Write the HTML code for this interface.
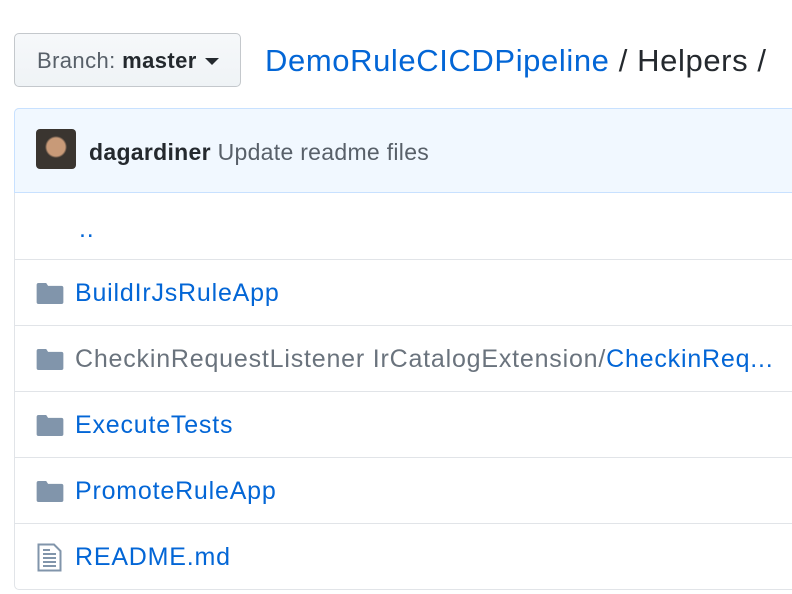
<!DOCTYPE html>
<html><head><style>
body{margin:0;width:792px;height:594px;overflow:hidden;background:#fff;font-family:"Liberation Sans",sans-serif;position:relative}
.btn{position:absolute;left:14px;top:33px;width:225px;height:52px;border:1px solid #c4c8cc;border-radius:5px;background:linear-gradient(#f6f8fa,#eff3f6);font-size:22px;letter-spacing:0.4px;color:#586069;line-height:54px;box-sizing:content-box}
.btn span{position:absolute;left:22px}
.btn b{color:#24292e;font-weight:600}
.caret{position:absolute;left:190px;top:24px;border-left:7px solid transparent;border-right:7px solid transparent;border-top:7px solid #24292e}
.title{position:absolute;left:265px;top:43px;font-size:31px;letter-spacing:0.6px;color:#24292e;white-space:nowrap}
.title a{color:#0366d6}
.box{position:absolute;left:14px;top:108px;width:800px;height:480px;border:1px solid #e1e4e8;border-radius:5px}
.head{position:absolute;left:0;top:0;right:0;height:83px;background:#f1f8ff;border:1px solid #c8e1ff;margin:-1px;border-radius:5px 5px 0 0}
.av{position:absolute;left:21px;top:20px;width:40px;height:40px;border-radius:4px;background:radial-gradient(circle at 50% 45%,#c89a78 0 9px,#3a3530 11px),#333}
.ht{position:absolute;left:74px;top:30px;font-size:23px;letter-spacing:0.3px;color:#586069;white-space:nowrap}
.ht b{color:#24292e}
.row{position:absolute;left:0;right:0;height:65px;border-top:1px solid #e1e4e8;font-size:25px;letter-spacing:0.8px;white-space:nowrap}
.row .t{position:absolute;left:60px;top:19px;color:#0366d6}
.fold{position:absolute;left:21px;top:23px;width:28px;height:21px}
</style></head><body>
<div class="btn"><span>Branch: <b>master</b></span><div class="caret"></div></div>
<div class="title"><a>DemoRuleCICDPipeline</a> / <b style="font-weight:normal">Helpers</b> /</div>
<div class="box">
<div class="head"><div class="av"></div><div class="ht"><b>dagardiner</b> Update readme files</div></div>
<div class="row" style="top:84px;border-top:none"><span class="t" style="left:64px;top:22px">..</span></div>
<div class="row" style="top:150px"><svg class="fold" viewBox="0 0 14 11"><path d="M0 1Q0 0 1 0H5L6 1.5H13Q14 1.5 14 2.5V10Q14 11 13 11H1Q0 11 0 10Z" fill="#8195ab"/></svg><span class="t">BuildIrJsRuleApp</span></div>
<div class="row" style="top:216px"><svg class="fold" viewBox="0 0 14 11"><path d="M0 1Q0 0 1 0H5L6 1.5H13Q14 1.5 14 2.5V10Q14 11 13 11H1Q0 11 0 10Z" fill="#8195ab"/></svg><span class="t"><span style="color:#6a737d">CheckinRequestListener IrCatalogExtension/</span>CheckinReq...</span></div>
<div class="row" style="top:282px"><svg class="fold" viewBox="0 0 14 11"><path d="M0 1Q0 0 1 0H5L6 1.5H13Q14 1.5 14 2.5V10Q14 11 13 11H1Q0 11 0 10Z" fill="#8195ab"/></svg><span class="t">ExecuteTests</span></div>
<div class="row" style="top:348px"><svg class="fold" viewBox="0 0 14 11"><path d="M0 1Q0 0 1 0H5L6 1.5H13Q14 1.5 14 2.5V10Q14 11 13 11H1Q0 11 0 10Z" fill="#8195ab"/></svg><span class="t">PromoteRuleApp</span></div>
<div class="row" style="top:414px"><svg style="position:absolute;left:22px;top:19px" width="25" height="29" viewBox="0 0 25 29"><path d="M1.5 1.5H17L23.5 8V27.5H1.5Z" fill="none" stroke="#8195ab" stroke-width="2"/><path d="M6 11H19M6 15H19M6 19H19M6 23H19M6 7H13" stroke="#8195ab" stroke-width="2"/></svg><span class="t">README.md</span></div>
</div>
</body></html>
